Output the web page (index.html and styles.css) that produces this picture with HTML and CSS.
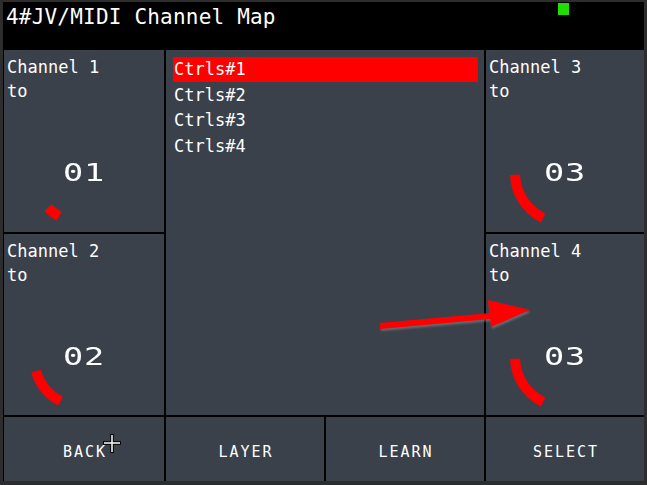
FILE: index.html
```html
<!DOCTYPE html>
<html>
<head>
<meta charset="utf-8">
<link rel="stylesheet" href="styles.css">
</head>
<body>
<div class="app">
  <header class="header">
    <div class="title">4#JV/MIDI Channel Map</div>
    <div class="status"></div>
  </header>
  <main class="grid">
    <section class="chan c1">
      <div class="label">Channel 1<br>to</div>
      <div class="value"><span class="num">01</span>
        <svg class="knob" width="120" height="120" viewBox="0 0 120 120"><path d="M35.00 103.30 A50 50 0 0 1 24.03 94.73" /></svg>
      </div>
    </section>
    <section class="list">
      <div class="item sel">Ctrls#1</div>
      <div class="item">Ctrls#2</div>
      <div class="item">Ctrls#3</div>
      <div class="item">Ctrls#4</div>
    </section>
    <section class="chan c3">
      <div class="label">Channel 3<br>to</div>
      <div class="value"><span class="num">03</span>
        <svg class="knob" width="120" height="120" viewBox="0 0 120 120"><path d="M38.08 104.94 A50 50 0 0 1 10.03 61.74" /></svg>
      </div>
    </section>
    <section class="chan c2">
      <div class="label">Channel 2<br>to</div>
      <div class="value"><span class="num">02</span>
        <svg class="knob" width="120" height="120" viewBox="0 0 120 120"><path d="M36.53 104.15 A50 50 0 0 1 12.02 74.05" /></svg>
      </div>
    </section>
    <section class="chan c4">
      <div class="label">Channel 4<br>to</div>
      <div class="value"><span class="num">03</span>
        <svg class="knob" width="120" height="120" viewBox="0 0 120 120"><path d="M38.08 104.94 A50 50 0 0 1 10.03 61.74" /></svg>
      </div>
    </section>
    <button class="btn back">BACK
      <svg class="cursor" width="20" height="21" viewBox="0 0 20 21"><path d="M10 1 V20 M1 10 H19" stroke="#000" stroke-width="3.5"/><path d="M10 2 V19 M2 10 H18" stroke="#fff" stroke-width="1.5"/></svg>
    </button>
    <button class="btn">LAYER</button>
    <button class="btn">LEARN</button>
    <button class="btn">SELECT</button>
  </main>
  <svg class="arrow" width="160" height="40" viewBox="0 0 160 40">
    <g transform="translate(-374 -294)">
      <path d="M377 324 L488 314" stroke="#ff0000" stroke-width="6" />
      <polygon points="485,298 527,308 488,325" fill="#ff0000" />
    </g>
  </svg>
</div>
</body>
</html>
```

FILE: styles.css
```css
html, body {
  margin: 0;
  padding: 0;
}
body {
  background: #2d2d2d;
  width: 647px;
  height: 485px;
  overflow: hidden;
  font-family: "DejaVu Sans Mono", monospace;
  color: #ffffff;
}
.app {
  position: relative;
  margin: 2px 3px 0 3px;
  width: 641px;
  background: #000;
}
.header {
  position: relative;
  height: 48px;
  padding: 3px 0 0 3px;
  box-sizing: border-box;
}
.title {
  font-size: 21px;
  line-height: 24px;
  letter-spacing: 0.2px;
}
.status {
  position: absolute;
  left: 555px;
  top: 1px;
  width: 11px;
  height: 12px;
  background: #22dd00;
}
.grid {
  display: grid;
  grid-template-columns: 160px 158px 158px 158px;
  grid-template-rows: 182px 181px 64px;
  gap: 2px;
  padding-left: 1px;
}
.chan {
  background: #3a414b;
  display: flex;
  flex-direction: column;
  padding: 5px 0 0 3px;
}
.c1 { grid-column: 1; grid-row: 1; }
.c2 { grid-column: 1; grid-row: 2; }
.c3 { grid-column: 4; grid-row: 1; }
.c4 { grid-column: 4; grid-row: 2; }
.label {
  font-size: 17px;
  line-height: 24px;
}
.value {
  position: relative;
  margin-top: 58px;
  margin-left: -3px;
  text-align: center;
  font-size: 24px;
  line-height: 24px;
}
.num {
  display: inline-block;
  transform: scaleX(1.4);
  letter-spacing: 0.5px;
}
.knob {
  position: absolute;
  left: 50%;
  top: 50%;
  transform: translate(-50%, -50%);
  fill: none;
  stroke: #ff0000;
  stroke-width: 10;
}
.list {
  grid-column: 2 / 4;
  grid-row: 1 / 3;
  background: #3a414b;
  padding: 7px 6px 0 7px;
}
.item {
  font-size: 17px;
  line-height: 25.5px;
  height: 25.5px;
  padding-left: 1px;
}
.item.sel {
  background: #ff0000;
  height: 25px;
  line-height: 25px;
  margin-bottom: 0.5px;
}
.btn {
  position: relative;
  background: #3a414b;
  border: none;
  color: #fff;
  font-family: "DejaVu Sans Mono", monospace;
  font-size: 15px;
  letter-spacing: 2px;
  padding: 5px 0 0 2px;
  margin: 0;
  display: flex;
  align-items: center;
  justify-content: center;
}
.cursor {
  position: absolute;
  left: 98px;
  top: 16px;
}
.arrow {
  position: absolute;
  left: 374px;
  top: 294px;
  filter: drop-shadow(1px 2px 1px rgba(150,150,150,0.5));
}
```
